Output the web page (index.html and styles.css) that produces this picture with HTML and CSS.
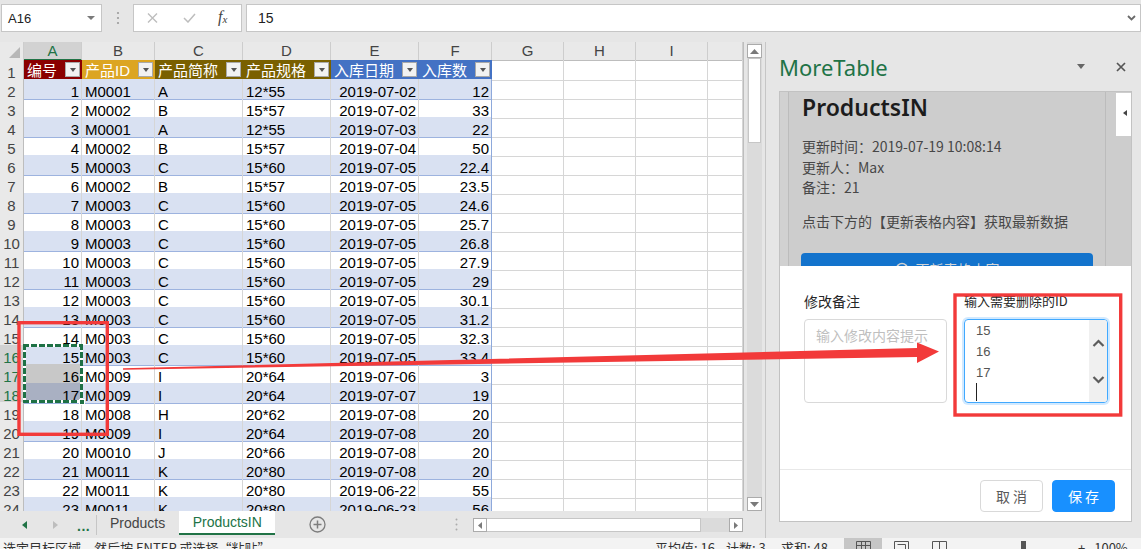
FILE: index.html
```html
<!DOCTYPE html>
<html lang="zh-CN">
<head>
<meta charset="utf-8">
<title>MoreTable - ProductsIN</title>
<link rel="stylesheet" href="styles.css">
</head>
<body>
<div class="fbar">
  <div class="namebox"><span>A16</span><span class="dd"></span></div>
  <div class="fdots"><svg width="4" height="14" viewBox="0 0 4 14"><circle cx="2" cy="2" r="1.1" fill="#9c9c9c"/><circle cx="2" cy="7" r="1.1" fill="#9c9c9c"/><circle cx="2" cy="12" r="1.1" fill="#9c9c9c"/></svg></div>
  <div class="fnbox">
    <svg class="x" width="11" height="10" viewBox="0 0 11 10"><path d="M1 0.5L10 9.5M10 0.5L1 9.5" stroke="#bdbdbd" stroke-width="1.4" fill="none"/></svg>
    <svg class="ok" width="13" height="10" viewBox="0 0 13 10"><path d="M1 5L5 9L12 1" stroke="#bdbdbd" stroke-width="1.5" fill="none"/></svg>
    <span class="fx">f<sub>x</sub></span>
  </div>
  <div class="finput"><span>15</span><svg width="9" height="6" viewBox="0 0 9 6"><path d="M1 1L4.5 4.5L8 1" stroke="#6a6a6a" stroke-width="1.8" fill="none"/></svg></div>
</div>

<div class="main">
  <div class="sheet">
    <div class="gridwrap">
      <div class="grid">
        <div class="r hd"><span class="corner"><svg width="11" height="11" viewBox="0 0 11 11"><path d="M11 0L11 11L0 11Z" fill="#b7b7b7"/></svg></span><span class="sel">A</span><span>B</span><span>C</span><span>D</span><span>E</span><span>F</span><span>G</span><span>H</span><span>I</span><span></span></div>
        <div class="r t"><span class="rh">1</span><span class="c1"><em>编号</em><i class="fb"></i></span><span class="c2"><em>产品ID</em><i class="fb"></i></span><span class="c3"><em>产品简称</em><i class="fb"></i></span><span class="c3"><em>产品规格</em><i class="fb"></i></span><span class="c4"><em>入库日期</em><i class="fb"></i></span><span class="c4"><em>入库数</em><i class="fb"></i></span><span></span><span></span><span></span><span></span></div>
        <div class="r d b"><span class="rh">2</span><span class="n">1</span><span>M0001</span><span>A</span><span>12*55</span><span class="n">2019-07-02</span><span class="n">12</span><span></span><span></span><span></span><span></span></div>
        <div class="r d"><span class="rh">3</span><span class="n">2</span><span>M0002</span><span>B</span><span>15*57</span><span class="n">2019-07-02</span><span class="n">33</span><span></span><span></span><span></span><span></span></div>
        <div class="r d b"><span class="rh">4</span><span class="n">3</span><span>M0001</span><span>A</span><span>12*55</span><span class="n">2019-07-03</span><span class="n">22</span><span></span><span></span><span></span><span></span></div>
        <div class="r d"><span class="rh">5</span><span class="n">4</span><span>M0002</span><span>B</span><span>15*57</span><span class="n">2019-07-04</span><span class="n">50</span><span></span><span></span><span></span><span></span></div>
        <div class="r d b"><span class="rh">6</span><span class="n">5</span><span>M0003</span><span>C</span><span>15*60</span><span class="n">2019-07-05</span><span class="n">22.4</span><span></span><span></span><span></span><span></span></div>
        <div class="r d"><span class="rh">7</span><span class="n">6</span><span>M0002</span><span>B</span><span>15*57</span><span class="n">2019-07-05</span><span class="n">23.5</span><span></span><span></span><span></span><span></span></div>
        <div class="r d b"><span class="rh">8</span><span class="n">7</span><span>M0003</span><span>C</span><span>15*60</span><span class="n">2019-07-05</span><span class="n">24.6</span><span></span><span></span><span></span><span></span></div>
        <div class="r d"><span class="rh">9</span><span class="n">8</span><span>M0003</span><span>C</span><span>15*60</span><span class="n">2019-07-05</span><span class="n">25.7</span><span></span><span></span><span></span><span></span></div>
        <div class="r d b"><span class="rh">10</span><span class="n">9</span><span>M0003</span><span>C</span><span>15*60</span><span class="n">2019-07-05</span><span class="n">26.8</span><span></span><span></span><span></span><span></span></div>
        <div class="r d"><span class="rh">11</span><span class="n">10</span><span>M0003</span><span>C</span><span>15*60</span><span class="n">2019-07-05</span><span class="n">27.9</span><span></span><span></span><span></span><span></span></div>
        <div class="r d b"><span class="rh">12</span><span class="n">11</span><span>M0003</span><span>C</span><span>15*60</span><span class="n">2019-07-05</span><span class="n">29</span><span></span><span></span><span></span><span></span></div>
        <div class="r d"><span class="rh">13</span><span class="n">12</span><span>M0003</span><span>C</span><span>15*60</span><span class="n">2019-07-05</span><span class="n">30.1</span><span></span><span></span><span></span><span></span></div>
        <div class="r d b"><span class="rh">14</span><span class="n">13</span><span>M0003</span><span>C</span><span>15*60</span><span class="n">2019-07-05</span><span class="n">31.2</span><span></span><span></span><span></span><span></span></div>
        <div class="r d"><span class="rh">15</span><span class="n">14</span><span>M0003</span><span>C</span><span>15*60</span><span class="n">2019-07-05</span><span class="n">32.3</span><span></span><span></span><span></span><span></span></div>
        <div class="r d b"><span class="rh rs">16</span><span class="n">15</span><span>M0003</span><span>C</span><span>15*60</span><span class="n">2019-07-05</span><span class="n">33.4</span><span></span><span></span><span></span><span></span></div>
        <div class="r d"><span class="rh rs">17</span><span class="n s1">16</span><span>M0009</span><span>I</span><span>20*64</span><span class="n">2019-07-06</span><span class="n">3</span><span></span><span></span><span></span><span></span></div>
        <div class="r d b"><span class="rh rs">18</span><span class="n s2">17</span><span>M0009</span><span>I</span><span>20*64</span><span class="n">2019-07-07</span><span class="n">19</span><span></span><span></span><span></span><span></span></div>
        <div class="r d"><span class="rh">19</span><span class="n">18</span><span>M0008</span><span>H</span><span>20*62</span><span class="n">2019-07-08</span><span class="n">20</span><span></span><span></span><span></span><span></span></div>
        <div class="r d b"><span class="rh">20</span><span class="n">19</span><span>M0009</span><span>I</span><span>20*64</span><span class="n">2019-07-08</span><span class="n">20</span><span></span><span></span><span></span><span></span></div>
        <div class="r d"><span class="rh">21</span><span class="n">20</span><span>M0010</span><span>J</span><span>20*66</span><span class="n">2019-07-08</span><span class="n">20</span><span></span><span></span><span></span><span></span></div>
        <div class="r d b"><span class="rh">22</span><span class="n">21</span><span>M0011</span><span>K</span><span>20*80</span><span class="n">2019-07-08</span><span class="n">20</span><span></span><span></span><span></span><span></span></div>
        <div class="r d"><span class="rh">23</span><span class="n">22</span><span>M0011</span><span>K</span><span>20*80</span><span class="n">2019-06-22</span><span class="n">55</span><span></span><span></span><span></span><span></span></div>
        <div class="r d b"><span class="rh">24</span><span class="n">23</span><span>M0011</span><span>K</span><span>20*80</span><span class="n">2019-06-23</span><span class="n">56</span><span></span><span></span><span></span><span></span></div>
        <div class="ants"></div>
        <div class="handle"></div>
      </div>
      <div class="vscroll">
        <span class="vbtn"><svg width="9" height="5" viewBox="0 0 9 5"><path d="M0 5L4.5 0L9 5Z" fill="#7a7a7a"/></svg></span>
        <span class="vthumb"></span>
        <span class="vspace"></span>
        <span class="vbtn"><svg width="9" height="5" viewBox="0 0 9 5"><path d="M0 0L4.5 5L9 0Z" fill="#7a7a7a"/></svg></span>
      </div>
    </div>
    <div class="tabbar">
      <div class="navs">
        <svg class="nl" width="5" height="8" viewBox="0 0 5 8"><path d="M5 0L0 4L5 8Z" fill="#217346"/></svg>
        <svg class="nr" width="5" height="8" viewBox="0 0 5 8"><path d="M0 0L5 4L0 8Z" fill="#bdbdbd"/></svg>
        <span class="more">...</span>
      </div>
      <div class="tab">Products</div>
      <div class="tab on">ProductsIN</div>
      <div class="add"><svg width="17" height="17" viewBox="0 0 17 17"><circle cx="8.5" cy="8.5" r="7.5" fill="none" stroke="#7d7d7d" stroke-width="1.3"/><path d="M8.5 4.5V12.5M4.5 8.5H12.5" stroke="#7d7d7d" stroke-width="1.5"/></svg></div>
      <div class="tdots"><svg width="3" height="13" viewBox="0 0 3 13"><circle cx="1.5" cy="1.5" r="1" fill="#ababab"/><circle cx="1.5" cy="6.5" r="1" fill="#ababab"/><circle cx="1.5" cy="11.5" r="1" fill="#ababab"/></svg></div>
      <div class="hscroll">
        <span class="hbtn"><svg width="4" height="7" viewBox="0 0 4 7"><path d="M4 0L0 3.5L4 7Z" fill="#7a7a7a"/></svg></span>
        <span class="hthumb"></span>
        <span class="htrack"></span>
        <span class="hbtn"><svg width="4" height="7" viewBox="0 0 4 7"><path d="M0 0L4 3.5L0 7Z" fill="#7a7a7a"/></svg></span>
      </div>
    </div>
  </div>

  <div class="pane">
    <div class="ptitle">
      <span class="pname">MoreTable</span>
      <span class="pdd"></span>
      <svg class="pclose" width="10" height="10" viewBox="0 0 10 10"><path d="M1 1L9 9M9 1L1 9" stroke="#555" stroke-width="1.7" fill="none"/></svg>
    </div>
    <div class="frame">
      <div class="page">
        <div class="stripe"></div>
        <div class="content">
          <h1>ProductsIN</h1>
          <div class="info">
            <p>更新时间：2019-07-19 10:08:14</p>
            <p>更新人：Max</p>
            <p>备注：21</p>
          </div>
          <p class="hint">点击下方的【更新表格内容】获取最新数据</p>
          <div class="refresh"><svg width="14" height="14" viewBox="0 0 14 14"><circle cx="7" cy="7" r="5.5" fill="none" stroke="#d0d0d0" stroke-width="1.5"/></svg><span>更新表格内容</span></div>
        </div>
        <div class="side"><span class="stab"></span></div>
      </div>
      <div class="modal">
        <div class="mbody">
          <div class="field">
            <div class="lbl">修改备注</div>
            <div class="ta"><span class="ph">输入修改内容提示</span></div>
          </div>
          <div class="field wide">
            <div class="lbl sm">输入需要删除的ID</div>
            <div class="ta focus">
              <div class="lines">15<br>16<br>17<span class="caret"></span></div>
              <div class="tscroll">
                <svg width="13" height="8" viewBox="0 0 13 8"><path d="M1.5 7L6.5 2L11.5 7" stroke="#5c5c5c" stroke-width="2.2" fill="none"/></svg>
                <svg width="13" height="8" viewBox="0 0 13 8"><path d="M1.5 1L6.5 6L11.5 1" stroke="#5c5c5c" stroke-width="2.2" fill="none"/></svg>
              </div>
            </div>
          </div>
        </div>
        <div class="mfoot">
          <button class="btn">取 消</button>
          <button class="btn pri">保 存</button>
        </div>
      </div>
    </div>
  </div>
</div>

<div class="status">
  <span class="msg">选定目标区域，然后按 ENTER 或选择“粘贴”</span>
  <span class="st1">平均值: 16</span>
  <span class="st2">计数: 3</span>
  <span class="st3">求和: 48</span>
  <span class="views">
    <span class="on"><svg width="15" height="12" viewBox="0 0 15 12"><path d="M0.5 0.5H14.5V11.5H0.5ZM5.5 0.5V11.5M9.5 0.5V11.5M0.5 4.5H14.5" stroke="#555" fill="none"/></svg></span>
    <span><svg width="15" height="12" viewBox="0 0 15 12"><path d="M0.5 0.5H14.5V11.5H0.5ZM3.5 3.5H11.5V11.5" stroke="#555" fill="none"/></svg></span>
    <span><svg width="15" height="12" viewBox="0 0 15 12"><path d="M0.5 0.5H14.5V11.5H0.5ZM7.5 0.5V11.5" stroke="#555" fill="none"/></svg></span>
  </span>
  <span class="zoomctl"><i class="knob"></i><b>+</b><span>100%</span></span>
</div>

<svg class="annot" width="1141" height="549" viewBox="0 0 1141 549">
  <rect x="19" y="322.7" width="88.3" height="111.6" fill="none" stroke="#f23a3a" stroke-width="3.4"/>
  <rect x="955" y="295" width="165.7" height="120" fill="none" stroke="#f23a3a" stroke-width="3.4"/>
  <polygon points="123,368.3 917,348 917,342.5 939,351.5 917,363 917,357 123,369.7" fill="#f23a3a"/>
</svg>
</body>
</html>
```

FILE: styles.css
```css
* { box-sizing: border-box; }
html, body { margin: 0; padding: 0; }
body {
  width: 1141px;
  height: 549px;
  overflow: hidden;
  position: relative;
  background: #e6e6e6;
  color: #000;
  font-family: "Liberation Sans", "Noto Sans CJK SC", sans-serif;
}

/* ---------- formula bar ---------- */
.fbar { height: 42px; display: flex; align-items: flex-start; padding: 4px 0 0 1px; }
.namebox {
  width: 101px; height: 28px; background: #fff; border: 1px solid #c6c6c6;
  display: flex; align-items: center; justify-content: space-between;
  padding: 0 6px 0 6px; font-size: 13px; color: #222;
}
.dd { width: 0; height: 0; border-left: 4px solid transparent; border-right: 4px solid transparent; border-top: 4px solid #7a7a7a; }
.fdots { width: 31px; height: 28px; display: flex; align-items: center; justify-content: center; }
.fnbox {
  width: 109px; height: 28px; background: #fff; border: 1px solid #c6c6c6;
  display: flex; align-items: center; padding-left: 13px;
}
.fnbox .x { margin-right: 25px; }
.fnbox .ok { margin-right: 22px; }
.fx { font-family: "Liberation Serif", serif; font-style: italic; font-size: 16px; color: #444; line-height: 16px; }
.fx sub { font-size: 11px; vertical-align: -1px; }
.finput {
  flex: 1; height: 28px; margin-left: 4px; background: #fff; border: 1px solid #c6c6c6;
  display: flex; align-items: center; justify-content: space-between;
  padding: 0 4px 0 11px; font-size: 14px; color: #222;
}

/* ---------- main ---------- */
.main { display: flex; height: 496px; }
.sheet { width: 765px; display: flex; flex-direction: column; }
.gridwrap { height: 469px; display: flex; }
.grid { width: 744px; border-right: 1px solid #bdbdbd; overflow: hidden; background: #fff; position: relative; }

.r {
  display: grid;
  grid-template-columns: 24px 58px 73px 88px 88px 88px 73px 72px 72px 72px 35px;
  height: 19px;
  font-size: 15px;
}
.r > span {
  border-right: 1px solid #d6d6d6;
  border-bottom: 1px solid #d6d6d6;
  padding: 5px 3px 0;
  line-height: 15px;
  white-space: nowrap;
}
.r > .n { text-align: right; padding-right: 2px; }
.r > .rh {
  background: #e9e9e9; color: #444; text-align: center; padding: 5px 0 0;
  border-right-color: #bdbdbd; border-bottom-color: #d2d2d2;
}
.r > .rs { background: #d2d2d2; color: #217346; }

.d > span:nth-child(n+2):nth-child(-n+7) { border-bottom-color: #9db3df; }
.d > span:nth-child(7) { border-right-color: #8ea9db; }
.b > span:nth-child(n+2):nth-child(-n+7) { background: #d9e1f2; }
.d > span.s1 { background: #c8c8c8; }
.b > span.s2:nth-child(2) { background: #a9b0c2; }

/* column header row */
.r.hd { height: 18px; }
.hd > span {
  background: #e9e9e9; color: #444; text-align: center;
  padding: 1px 0 0; line-height: 16px;
  border-right-color: #cdcdcd; border-bottom-color: #bdbdbd;
}
.hd > .sel { background: #d2d2d2; color: #217346; border-bottom: 2px solid #217346; }
.hd > .corner { display: flex; justify-content: flex-end; align-items: flex-end; padding: 0 3px 2px 0; }

/* table header row */
.t > span:nth-child(n+2):nth-child(-n+7) {
  display: flex; align-items: flex-start; padding: 0 0 0 3px;
  color: #fff; border-right-color: transparent; border-bottom-color: #8ea9db;
}
.t > span:nth-child(7) { border-right-color: #8ea9db; }
.t em { font-style: normal; padding-top: 3px; line-height: 15px; }
.t > .c1 { background: #8a0000; }
.t > .c2 { background: #dca522; }
.t > .c3 { background: #7a6000; }
.t > .c4 { background: #4472c4; }
.fb {
  width: 15px; height: 15px; margin: 2px 1px 0 auto; background: #f2f2f2;
  border: 1px solid #a9a9a9; display: flex; align-items: center; justify-content: center;
}
.fb::after {
  content: ""; width: 0; height: 0;
  border-left: 3.5px solid transparent; border-right: 3.5px solid transparent; border-top: 4px solid #555;
}

/* copy selection (marching ants) */
.ants {
  position: absolute; left: 23px; top: 302px; width: 60px; height: 59px;
  background:
    repeating-linear-gradient(90deg, #1e7145 0 6px, #fff 6px 8px) top left / 100% 3px no-repeat,
    repeating-linear-gradient(90deg, #1e7145 0 6px, #fff 6px 8px) bottom left / 100% 3px no-repeat,
    repeating-linear-gradient(180deg, #1e7145 0 6px, #fff 6px 8px) top left / 3px 100% no-repeat,
    repeating-linear-gradient(180deg, #1e7145 0 6px, #fff 6px 8px) top right / 3px 100% no-repeat;
}
.handle { position: absolute; left: 79px; top: 357px; width: 6px; height: 6px; background: #1e7145; border: 1px solid #fff; }

/* vertical scrollbar */
.vscroll {
  width: 15px; margin-left: 3px; background: #dbdbdb;
  display: flex; flex-direction: column; padding-top: 2px;
}
.vbtn {
  height: 14px; background: #fff; border: 1px solid #ababab;
  display: flex; align-items: center; justify-content: center; flex: none;
}
.vthumb { height: 85px; margin: 0 1px; background: #fff; border: 1px solid #c6c6c6; flex: none; }
.vspace { flex: 1; }

/* sheet tabs */
.tabbar { height: 27px; display: flex; align-items: flex-start; font-size: 14px; }
.navs {
  width: 97px; height: 20px; margin-top: 4px; border-right: 1px solid #c6c6c6;
  display: flex; align-items: center; padding-left: 22px;
}
.nl { margin-right: 26px; }
.nr { margin-right: 19px; }
.more { color: #217346; font-weight: bold; font-size: 14px; line-height: 14px; padding-top: 2px; letter-spacing: 0.5px; }
.tab { height: 24px; line-height: 24px; padding: 0 14px 0 13px; color: #444; }
.tab.on {
  width: 96px; padding: 0; text-align: center; background: #fff; color: #217346;
  border-bottom: 2px solid #217346; line-height: 23px;
}
.add { width: 84px; height: 27px; display: flex; align-items: center; justify-content: center; }
.tdots { margin-left: 96px; width: 3px; height: 27px; display: flex; align-items: center; }
.hscroll { margin-left: 15px; margin-top: 7px; width: 270px; height: 14px; display: flex; }
.hbtn {
  width: 14px; height: 14px; background: #fff; border: 1px solid #ababab;
  display: flex; align-items: center; justify-content: center;
}
.hthumb { width: 214px; background: #fff; border: 1px solid #c6c6c6; border-left: 0; }
.htrack { flex: 1; background: #dbdbdb; }

/* ---------- task pane ---------- */
.pane {
  width: 376px; border-left: 1px solid #c6c6c6;
  display: flex; flex-direction: column; padding: 0 9px 16px 13px;
}
.ptitle { height: 49px; display: flex; align-items: center; flex: none; }
.pname { flex: 1; font-family: "Noto Sans", sans-serif; font-size: 22px; line-height: 30px; color: #217346; }
.pdd {
  width: 0; height: 0; margin-right: 31px;
  border-left: 4.5px solid transparent; border-right: 4.5px solid transparent; border-top: 5px solid #666;
}
.pclose { margin-right: 6px; }

.frame { flex: 1; border: 1px solid #c2c2c2; display: flex; flex-direction: column; overflow: hidden; }
.page { height: 174px; flex: none; display: flex; background: #cdcdcd; overflow: hidden; }
.stripe { width: 9px; background: #d1d1d1; border-right: 1px solid #bcbcbc; flex: none; }
.content {
  width: 317px; flex: none; padding: 0 12px 0 13px; border-right: 1px solid #bcbcbc;
  font-family: "Noto Sans CJK SC", sans-serif; font-size: 14px; color: #474747;
}
.content h1 {
  margin: 0; font-family: "Noto Sans", sans-serif; font-weight: 600;
  font-size: 23px; line-height: 30px; color: #1c1c1c;
}
.content p { margin: 0; line-height: 20.5px; }
.info { margin-top: 14px; }
.content .hint { margin-top: 13px; }
.refresh {
  margin: 22px 0 0 -1px; height: 32px; border-radius: 4px; background: #1373cc;
  display: flex; align-items: center; justify-content: center; gap: 7px; color: #d6d6d6;
}
.side { flex: 1; }
.stab { display: block; width: 15px; height: 43px; margin: 1px 0 0 10px; background: #fff; position: relative; }
.stab::after {
  content: ""; position: absolute; left: 7px; top: 17px; width: 0; height: 0;
  border-top: 3.5px solid transparent; border-bottom: 3.5px solid transparent; border-right: 4px solid #444;
}

.modal { flex: 1; background: #fff; display: flex; flex-direction: column; }
.mbody { flex: 1; display: flex; gap: 17px; padding: 25px 23px 0 24px; }
.field { width: 143px; }
.field.wide { width: 144px; }
.lbl { font-family: "Noto Sans CJK SC", sans-serif; font-size: 14px; line-height: 20px; color: #262626; margin-bottom: 8px; white-space: nowrap; }
.lbl.sm { font-size: 13px; }
.ta {
  height: 84px; border: 1px solid #d9d9d9; border-radius: 4px; padding: 4px 11px;
  font-size: 14px; line-height: 22px;
}
.ph { color: #bfbfbf; font-family: "Noto Sans CJK SC", sans-serif; white-space: nowrap; }
.ta.focus {
  border-color: #40a9ff; box-shadow: 0 0 0 2px rgba(24, 144, 255, 0.2);
  padding: 0 0 0 11px; display: flex; overflow: hidden;
}
.lines { flex: 1; font-size: 13px; line-height: 21px; color: #555; }
.caret { display: block; width: 1px; height: 18px; background: #222; }
.tscroll {
  width: 18px; background: #f0f0f0; display: flex; flex-direction: column;
  align-items: center; padding-top: 19px; gap: 29px;
}
.mfoot {
  flex: none; border-top: 1px solid #e8e8e8; padding: 10px 16px 9px;
  display: flex; justify-content: flex-end; gap: 9px;
}
.btn {
  width: 63px; height: 32px; border: 1px solid #d9d9d9; border-radius: 4px; background: #fff;
  color: #595959; font-family: "Noto Sans CJK SC", sans-serif; font-size: 14px; padding: 0;
}
.btn.pri { background: #1890ff; border-color: #1890ff; color: #fff; }

/* ---------- status bar ---------- */
.status {
  height: 22px; background: #f3f3f3; display: flex; padding-left: 3px;
  font-family: "Noto Sans CJK SC", sans-serif; font-size: 13px; line-height: 20px; color: #333;
  white-space: nowrap;
}
.msg { width: 652px; }
.st1 { width: 71px; }
.st2 { width: 55px; }
.st3 { width: 63px; }
.views { display: flex; }
.views > span { width: 38px; height: 22px; display: flex; justify-content: center; padding-top: 3px; }
.views > .on { background: #c6c6c6; }
.zoomctl { flex: 1; display: flex; align-items: flex-start; }
.knob { display: block; width: 5px; height: 10px; background: #555; margin: 3px 0 0 63px; }
.zoomctl b { font-weight: normal; margin-left: 52px; }
.zoomctl span { margin-left: 9px; }

/* annotations */
.annot { position: absolute; left: 0; top: 0; pointer-events: none; z-index: 10; }
```
